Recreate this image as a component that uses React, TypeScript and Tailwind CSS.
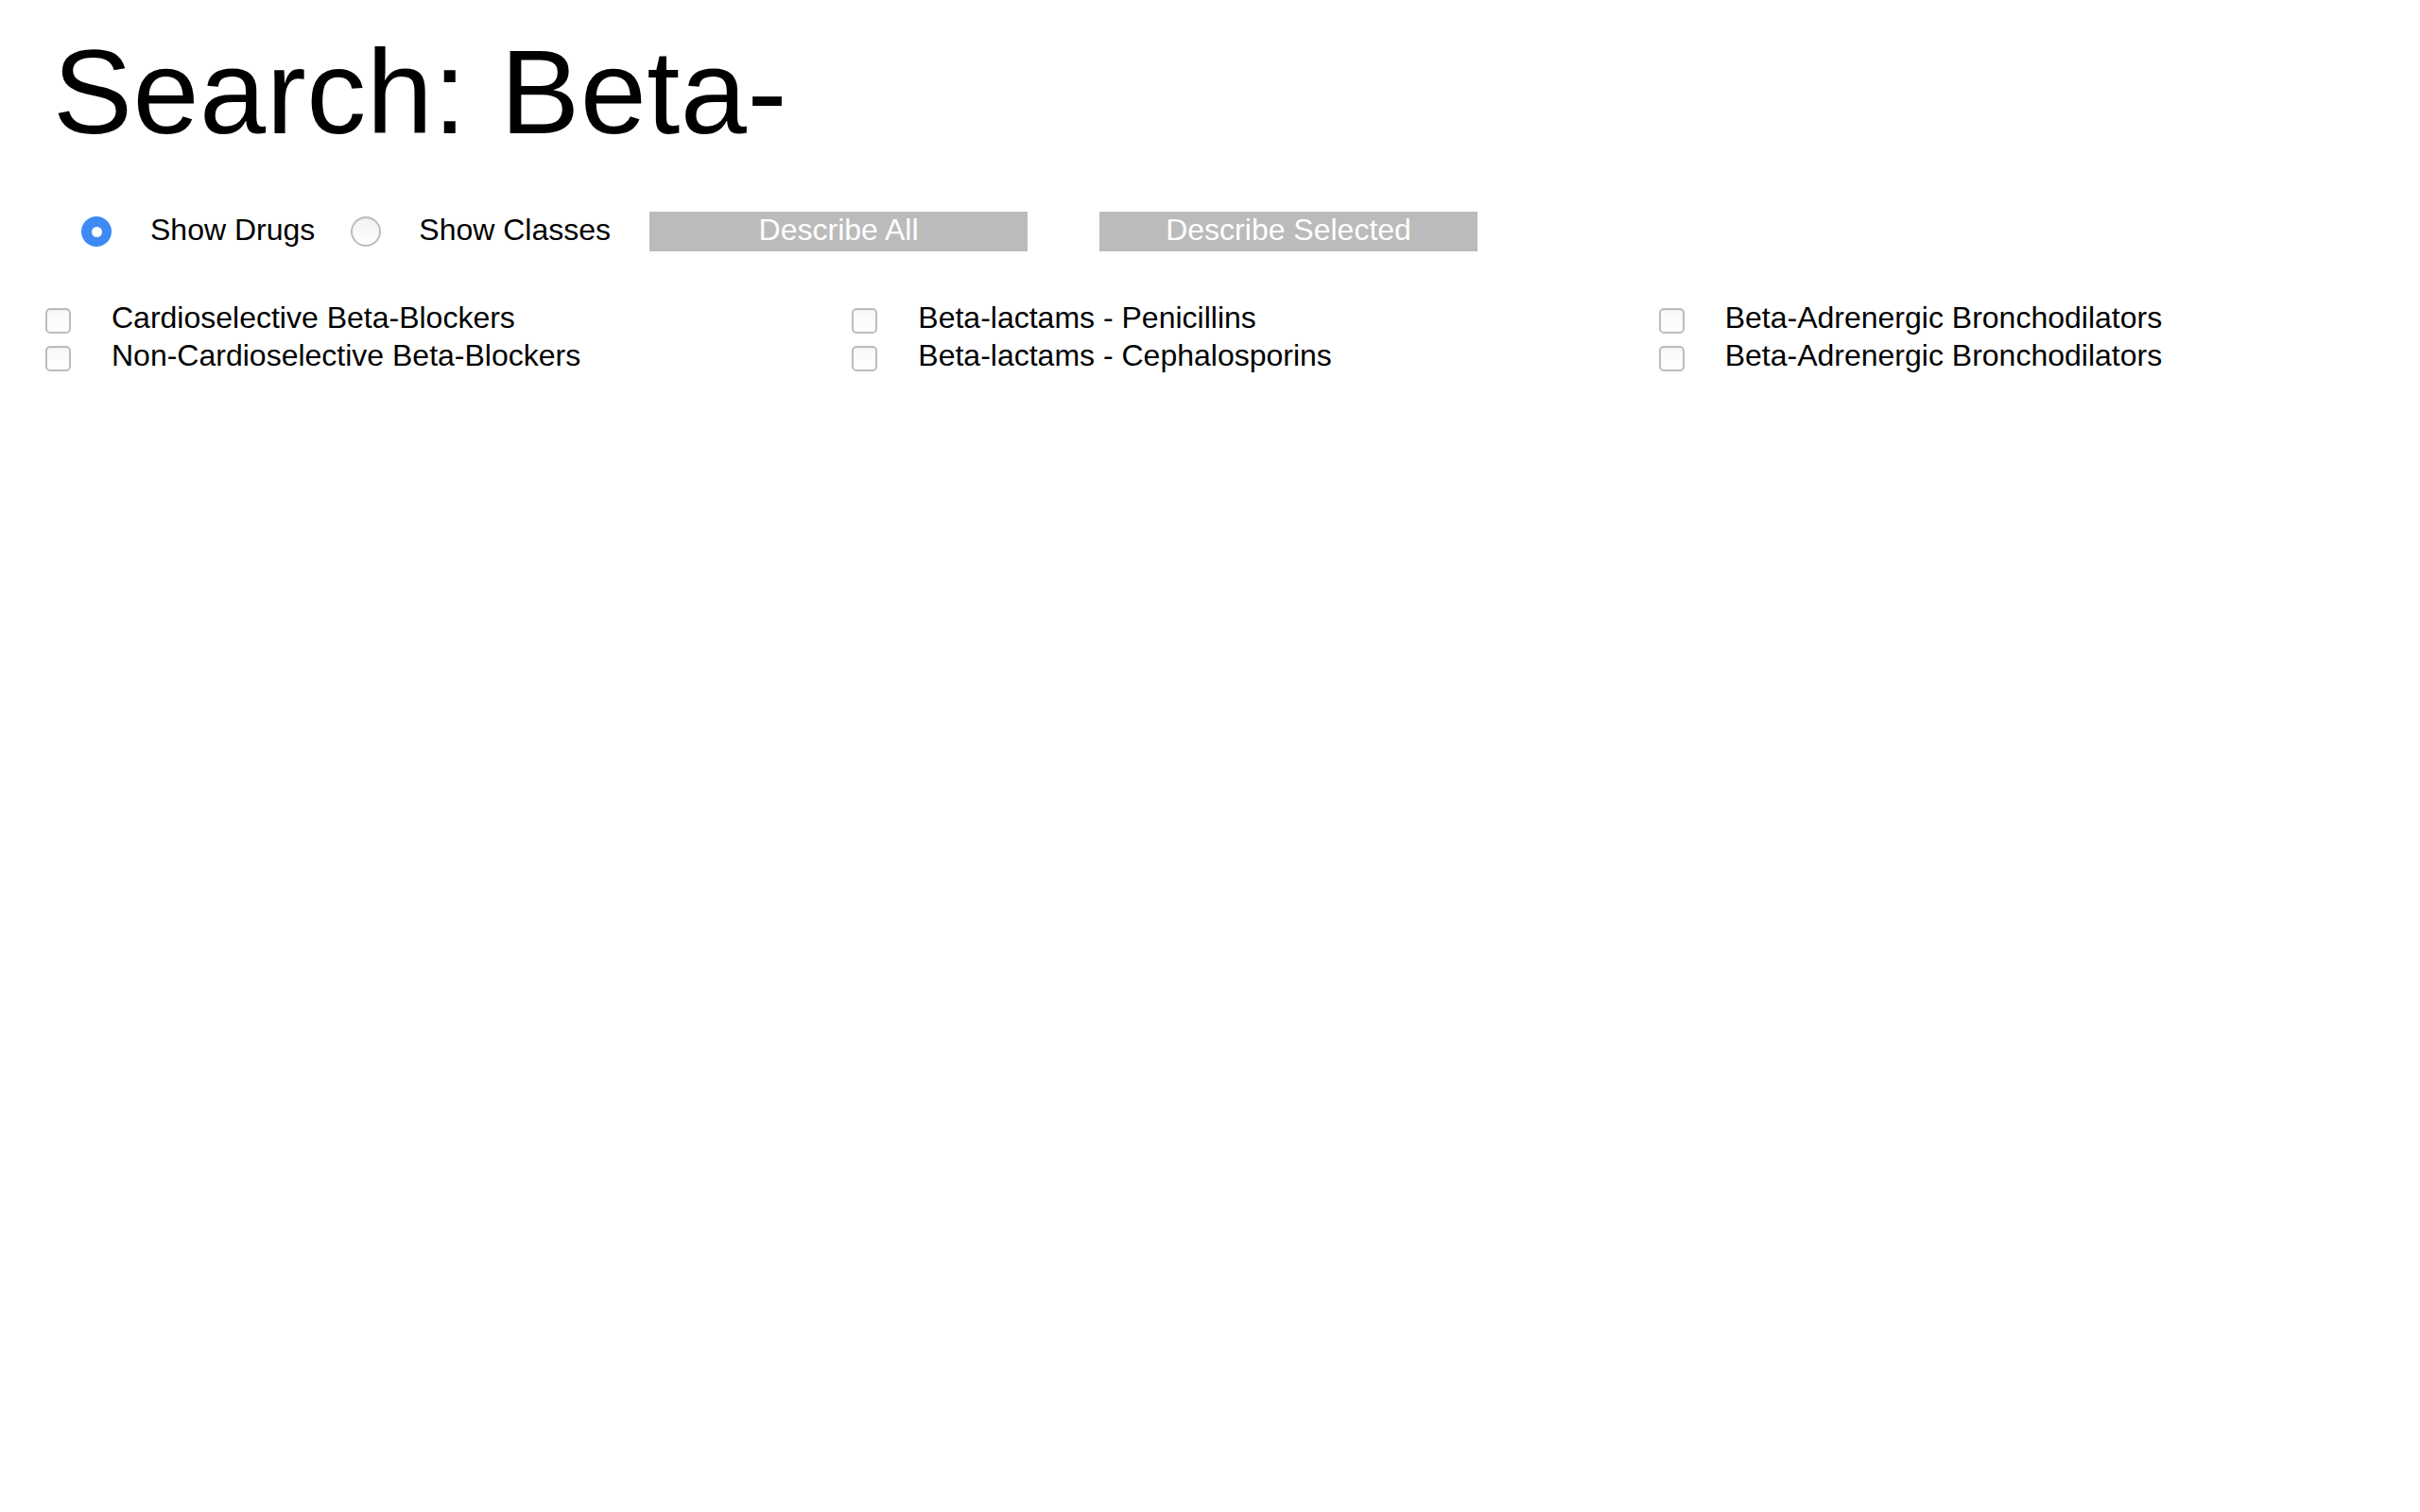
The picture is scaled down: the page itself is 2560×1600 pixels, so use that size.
import React from "react";

function Radio({ checked }: { checked: boolean }) {
  if (checked) {
    return (
      <span className="flex h-[32px] w-[32px] shrink-0 items-center justify-center rounded-full bg-[#3e8af5]">
        <span className="h-[11px] w-[11px] rounded-full bg-white" />
      </span>
    );
  }
  return (
    <span className="block h-[32px] w-[32px] shrink-0 rounded-full border-2 border-[#bdbdbd] bg-gradient-to-b from-[#f2f2f2] to-white shadow-[inset_0_1px_1px_rgba(0,0,0,0.06)]" />
  );
}

function Checkbox() {
  return (
    <span className="mt-[10px] block h-[27px] w-[27px] shrink-0 rounded-[5px] border-2 border-[#bdbdbd] bg-gradient-to-b from-[#f8f8f8] to-white shadow-[inset_0_1px_1px_rgba(0,0,0,0.05)]" />
  );
}

function Row({ label }: { label: string }) {
  return (
    <div className="flex h-[40px] items-start">
      <Checkbox />
      <span className="ml-[43px] text-[32px] leading-[40px] whitespace-nowrap">{label}</span>
    </div>
  );
}

const columns: string[][] = [
  ["Cardioselective Beta-Blockers", "Non-Cardioselective Beta-Blockers"],
  ["Beta-lactams - Penicillins", "Beta-lactams - Cephalosporins"],
  ["Beta-Adrenergic Bronchodilators", "Beta-Adrenergic Bronchodilators"],
];

export default function App() {
  return (
    <div className="min-h-[1600px] w-full bg-white text-black font-['Liberation_Sans',Arial,Helvetica,sans-serif]">
      <h1 className="pl-[56px] pt-[35px] text-[126px] font-normal leading-none tracking-[0.5px] whitespace-nowrap">
        Search: Beta-
      </h1>

      <div className="mt-[63px] flex h-[42px] items-center pl-[86px]">
        <Radio checked />
        <span className="mb-[4px] ml-[41px] text-[32px] leading-[38px] whitespace-nowrap">Show Drugs</span>
        <span className="ml-[38px]">
          <Radio checked={false} />
        </span>
        <span className="mb-[4px] ml-[40px] text-[32px] leading-[38px] whitespace-nowrap">Show Classes</span>
        <button className="ml-[41px] flex h-[42px] w-[400px] items-center justify-center bg-[#bbbbbb] pb-[4px] text-[32px] leading-[38px] text-white">
          Describe All
        </button>
        <button className="ml-[76px] flex h-[42px] w-[400px] items-center justify-center bg-[#bbbbbb] pb-[4px] text-[32px] leading-[38px] text-white">
          Describe Selected
        </button>
      </div>

      <div className="mt-[50px] grid grid-cols-3">
        {columns.map((col, i) => (
          <div key={i} className="pl-[48px]">
            {col.map((label, j) => (
              <Row key={j} label={label} />
            ))}
          </div>
        ))}
      </div>
    </div>
  );
}
